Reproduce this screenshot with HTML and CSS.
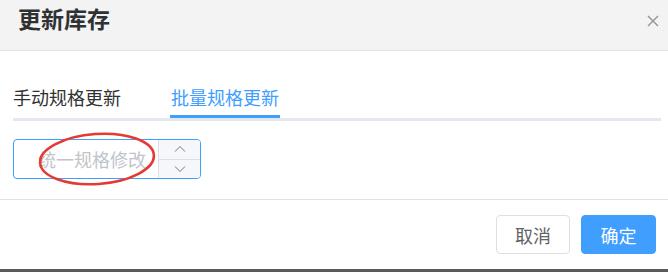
FILE: index.html
```html
<!DOCTYPE html>
<html lang="zh">
<head>
<meta charset="utf-8">
<link rel="stylesheet" href="styles.css">
</head>
<body>
<div class="dialog">
  <div class="header">
    <span class="title">更新库存</span>
    <svg class="close" width="12" height="12" viewBox="0 0 12 12"><path d="M1 1L11 11M11 1L1 11" stroke="#909399" stroke-width="1.4" fill="none"/></svg>
  </div>
  <div class="body">
    <div class="tabs">
      <div class="tab">手动规格更新</div>
      <div class="tab active">批量规格更新</div>
    </div>
    <div class="field">
      <div class="number">
        <div class="input">统一规格修改</div>
        <div class="controls">
          <div class="ctl"><svg width="12" height="8" viewBox="0 0 12 8"><path d="M1 6.5L6 1.5L11 6.5" stroke="#73767c" stroke-width="1" fill="none"/></svg></div>
          <div class="ctl"><svg width="12" height="8" viewBox="0 0 12 8"><path d="M1 1.5L6 6.5L11 1.5" stroke="#73767c" stroke-width="1" fill="none"/></svg></div>
        </div>
      </div>
      <svg class="mark" width="130" height="62" viewBox="0 0 130 62"><ellipse cx="64" cy="31" rx="57" ry="25" transform="rotate(-4 64 31)" fill="none" stroke="#e53a33" stroke-width="2.6"/></svg>
    </div>
  </div>
  <div class="footer">
    <div class="btn">取消</div>
    <div class="btn primary">确定</div>
  </div>
</div>
<div class="strip"></div>
</body>
</html>
```
FILE: styles.css
```css
html, body { margin: 0; padding: 0; background: #fff; }
body {
  width: 668px; height: 272px; overflow: hidden;
  font-family: "Noto Sans CJK SC", "Noto Sans", sans-serif;
  display: flex; flex-direction: column;
}
.dialog { flex: 1; display: flex; flex-direction: column; background: #fff; }
.header {
  height: 50px; background: #f3f3f3; border-bottom: 1px solid #e2e2e6;
  display: flex; align-items: flex-start; justify-content: space-between;
  padding: 0 9px 0 18px; box-sizing: content-box;
}
.title { font-size: 23px; font-weight: bold; color: #303133; line-height: 30px; margin-top: 3px; }
.close { margin-top: 15px; }
.body { padding: 27px 7px 20px 13px; }
.tabs {
  display: flex; border-bottom: 3px solid #e4e7ed; height: 40px;
}
.tab {
  font-size: 18px; line-height: 38px; color: #303133; height: 40px; box-sizing: border-box;
  margin-bottom: -3px; border-bottom: 3px solid transparent;
}
.tab + .tab { margin-left: 50px; }
.tab.active { color: #409eff; border-bottom-color: #409eff; padding: 0 1px; margin-left: 49px; }
.field { position: relative; margin-top: 18px; }
.number {
  width: 188px; height: 40px; box-sizing: border-box; border: 1px solid #409eff; border-radius: 4px;
  display: flex; overflow: hidden;
}
.input {
  flex: 1; font-size: 18px; color: #c0c4cc; line-height: 38px; padding-left: 24px; white-space: nowrap;
}
.controls { width: 41px; border-left: 1px solid #dcdfe6; background: #f5f7fa; display: flex; flex-direction: column; }
.ctl { flex: 1; display: flex; align-items: center; justify-content: center; }
.ctl + .ctl { border-top: 1px solid #dcdfe6; }
.mark { position: absolute; left: 20px; top: -11px; }
.footer {
  border-top: 1px solid #e2e2e6; padding: 15px 12px 0 0;
  display: flex; justify-content: flex-end; gap: 11px;
}
.btn {
  width: 74px; height: 39px; box-sizing: border-box; border: 1px solid #dcdfe6; border-radius: 4px;
  font-size: 18px; color: #606266; display: flex; align-items: center; justify-content: center;
}
.btn.primary { background: #409eff; border-color: #409eff; color: #fff; width: 75px; }
.strip { height: 3px; background: #5a5a5a; flex: none; }
```
